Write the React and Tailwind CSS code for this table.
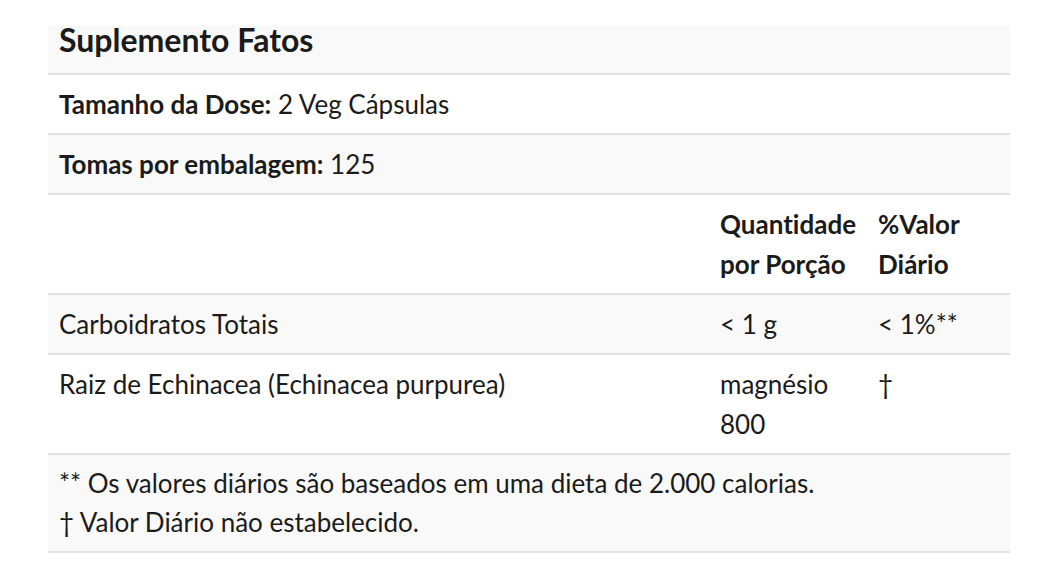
import React from 'react';

const rowBase = 'border-b-2 border-[#e3e3e3]';

const App = () => {
    return (
        <div className="min-h-screen bg-white pt-[25px] px-[48px] font-['Lato',sans-serif] text-[#1b1b1b] [font-variant-ligatures:none]">
            <div className="w-[962px]">
                <div className={`${rowBase} bg-[#f9f9f9] px-[11px] pb-[18px]`}>
                    <h2 className="text-[32px] font-bold leading-[30px]">Suplemento Fatos</h2>
                </div>
                <div className={`${rowBase} px-[11px] py-[9px] text-[26px] leading-[40px]`}>
                    <span className="font-bold">Tamanho da Dose:</span> 2 Veg Cápsulas
                </div>
                <div className={`${rowBase} bg-[#f9f9f9] px-[11px] py-[9px] text-[26px] leading-[40px]`}>
                    <span className="font-bold">Tomas por embalagem:</span> 125
                </div>

                <div className={`${rowBase} grid grid-cols-[661px_158px_143px] py-[9px] text-[26px] leading-[40px] font-bold`}>
                    <div className="px-[11px]"></div>
                    <div className="px-[11px]">Quantidade por Porção</div>
                    <div className="px-[11px]">%Valor Diário</div>
                </div>
                <div className={`${rowBase} bg-[#f9f9f9] grid grid-cols-[661px_158px_143px] py-[9px] text-[26px] leading-[40px]`}>
                    <div className="px-[11px]">Carboidratos Totais</div>
                    <div className="px-[11px]">&lt; 1 g</div>
                    <div className="px-[11px]">&lt; 1%**</div>
                </div>
                <div className={`${rowBase} grid grid-cols-[661px_158px_143px] py-[9px] text-[26px] leading-[40px]`}>
                    <div className="px-[11px]">Raiz de Echinacea (Echinacea purpurea)</div>
                    <div className="px-[11px]">magnésio 800</div>
                    <div className="px-[11px]">†</div>
                </div>

                <div className={`${rowBase} bg-[#f9f9f9] px-[11px] py-[9px] text-[26px] leading-[39px]`}>
                    <p>** Os valores diários são baseados em uma dieta de 2.000 calorias.</p>
                    <p>† Valor Diário não estabelecido.</p>
                </div>
            </div>
        </div>
    );
};

export default App;
